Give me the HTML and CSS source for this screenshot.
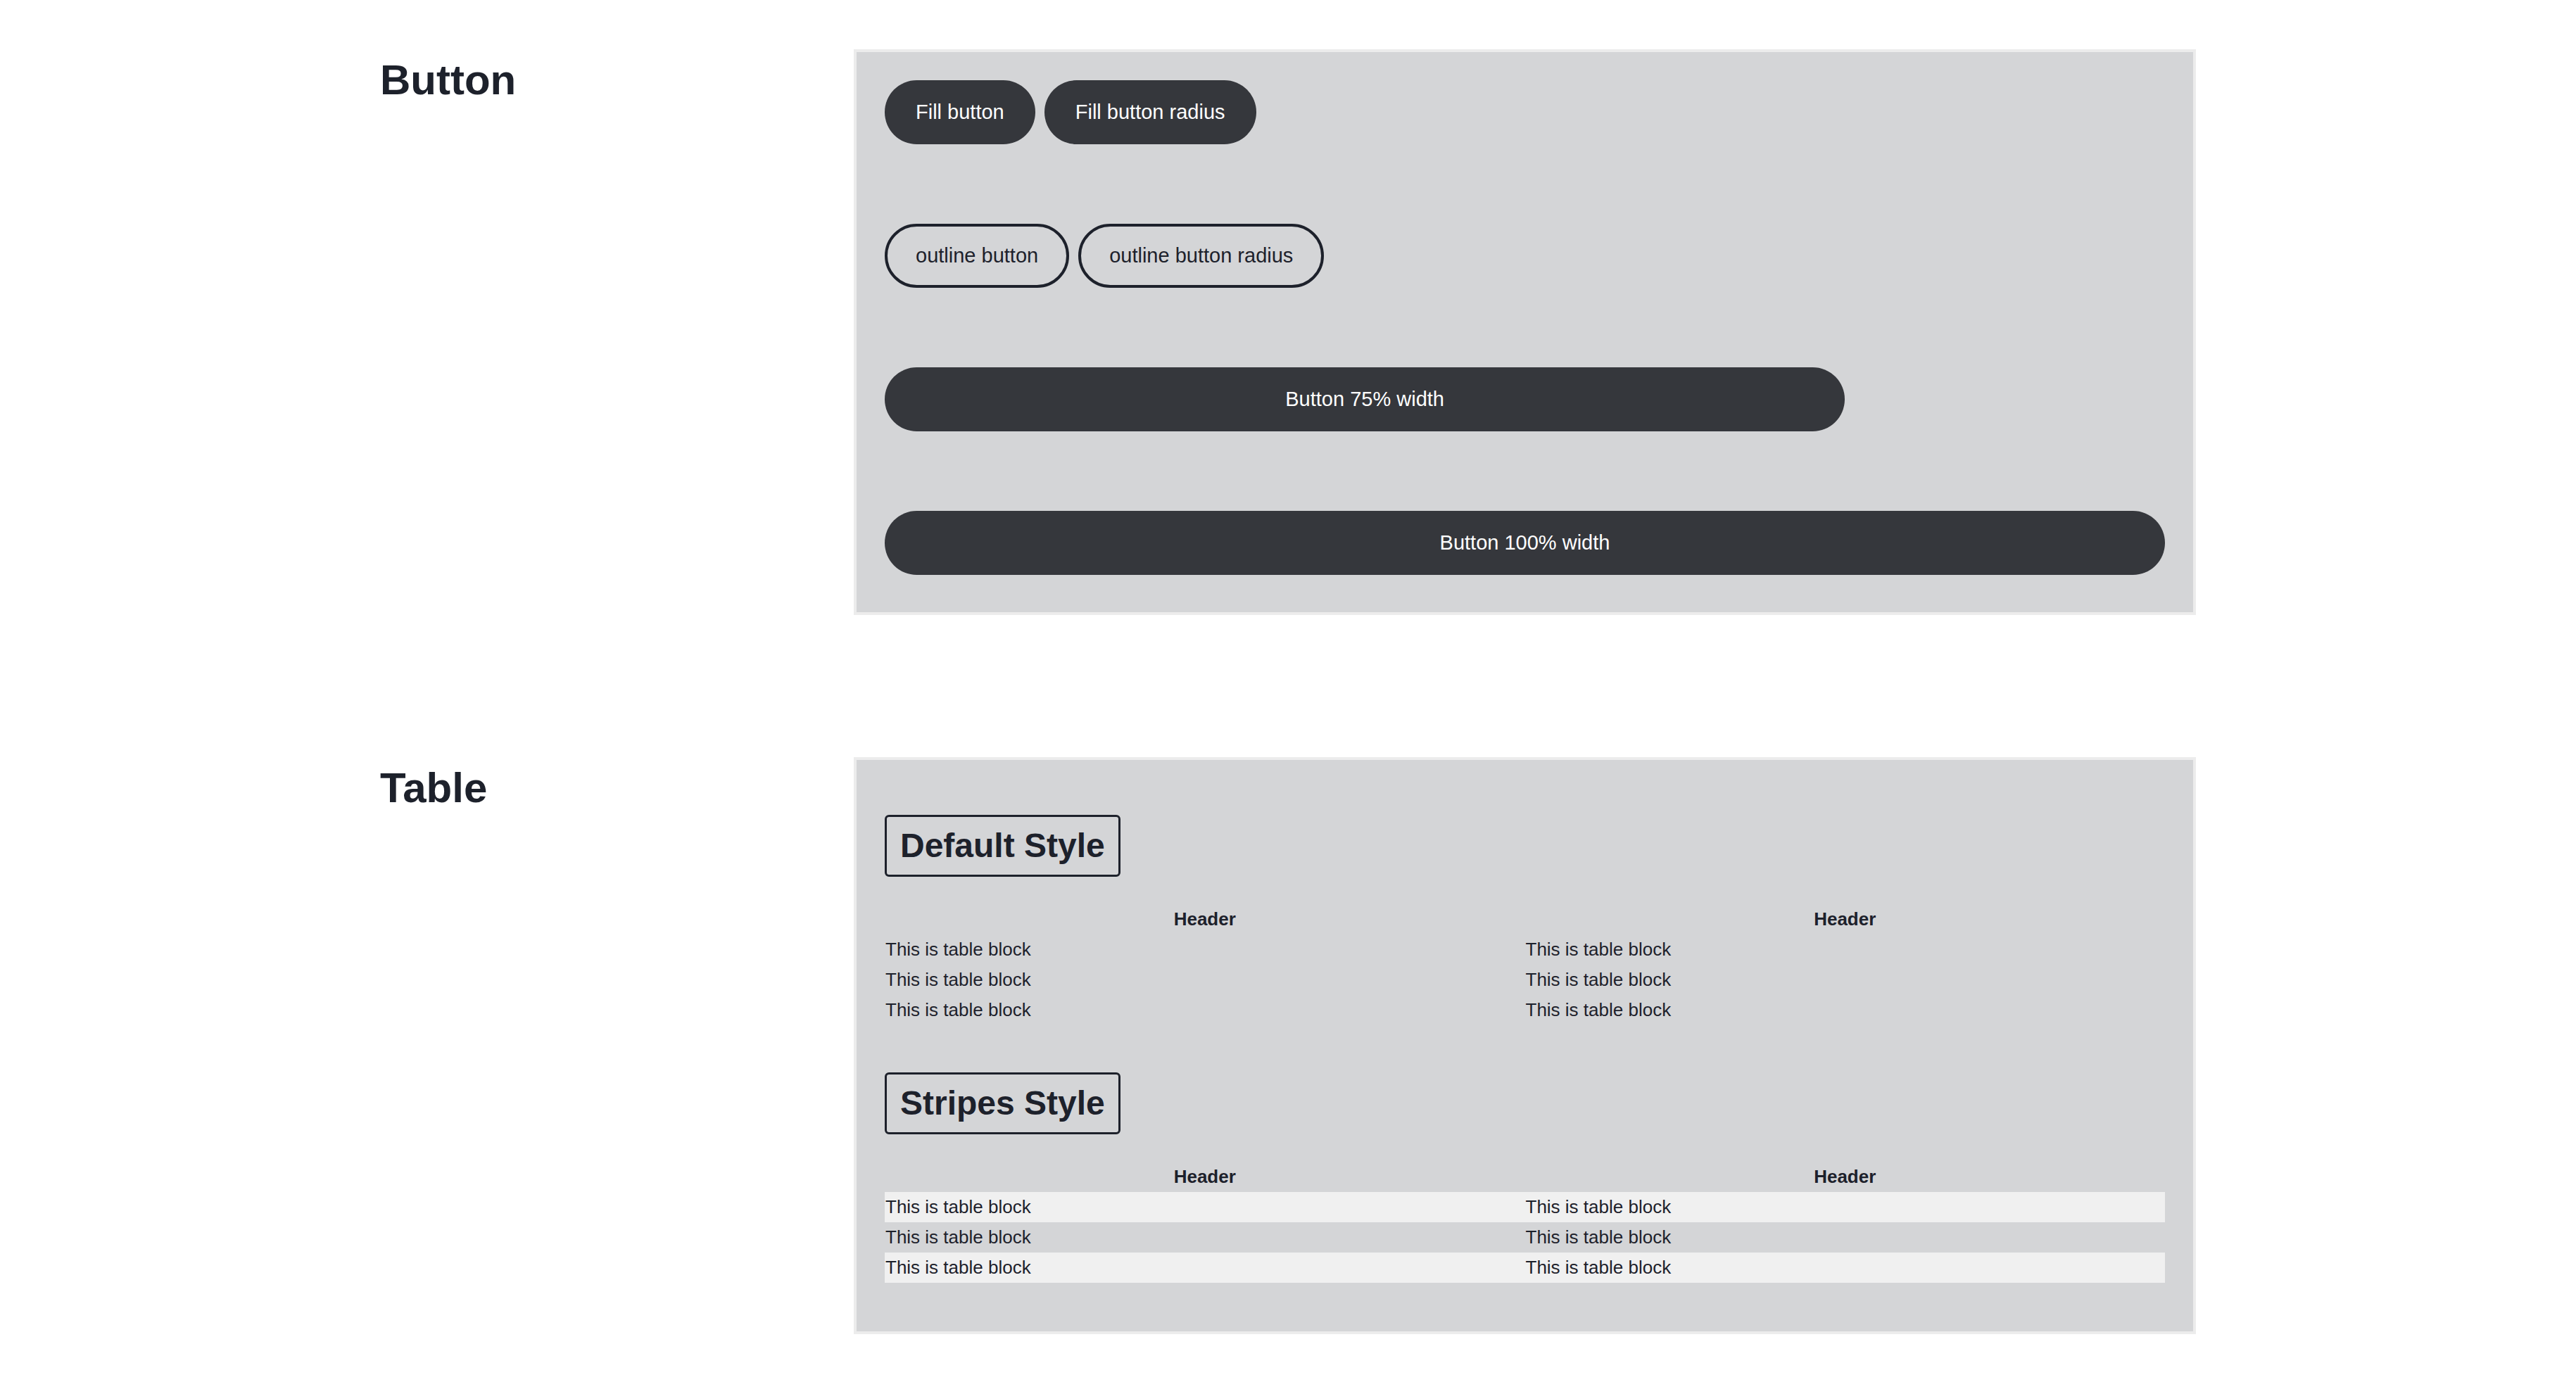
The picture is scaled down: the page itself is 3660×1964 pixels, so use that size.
FILE: index.html
```html
<!DOCTYPE html>
<html lang="en">
<head>
<meta charset="utf-8">
<title>Components</title>
<link rel="stylesheet" href="styles.css">
</head>
<body>
<div class="page">
  <section class="section">
    <h2 class="section-title">Button</h2>
    <div class="panel panel-buttons">
      <div class="btn-row">
        <button class="btn btn-fill">Fill button</button>
        <button class="btn btn-fill">Fill button radius</button>
      </div>
      <div class="btn-row">
        <button class="btn btn-outline">outline button</button>
        <button class="btn btn-outline">outline button radius</button>
      </div>
      <div class="btn-row">
        <button class="btn btn-fill btn-75">Button 75% width</button>
      </div>
      <div class="btn-row">
        <button class="btn btn-fill btn-100">Button 100% width</button>
      </div>
    </div>
  </section>
  <section class="section">
    <h2 class="section-title">Table</h2>
    <div class="panel panel-tables">
      <h3 class="table-title">Default Style</h3>
      <table class="tbl">
        <thead>
          <tr><th>Header</th><th>Header</th></tr>
        </thead>
        <tbody>
          <tr><td>This is table block</td><td>This is table block</td></tr>
          <tr><td>This is table block</td><td>This is table block</td></tr>
          <tr><td>This is table block</td><td>This is table block</td></tr>
        </tbody>
      </table>
      <h3 class="table-title">Stripes Style</h3>
      <table class="tbl tbl-stripes">
        <thead>
          <tr><th>Header</th><th>Header</th></tr>
        </thead>
        <tbody>
          <tr><td>This is table block</td><td>This is table block</td></tr>
          <tr><td>This is table block</td><td>This is table block</td></tr>
          <tr><td>This is table block</td><td>This is table block</td></tr>
        </tbody>
      </table>
    </div>
  </section>
</div>
</body>
</html>
```

FILE: styles.css
```css
* {
  box-sizing: border-box;
}

html, body {
  margin: 0;
  padding: 0;
  background: #ffffff;
}

body {
  font-family: "Liberation Sans", Arial, sans-serif;
  color: #1d212b;
  font-size: 29px;
}

.page {
  width: 2580px;
  margin: 0 auto;
  padding-top: 70px;
  padding-bottom: 20px;
  display: flex;
  flex-direction: column;
  gap: 202px;
}

.section {
  display: grid;
  grid-template-columns: 673px 1fr;
  align-items: start;
}

.section-title {
  margin: 14px 0 0;
  font-size: 60px;
  line-height: 60px;
  font-weight: bold;
  color: #1d212b;
}

.panel {
  background: #d4d5d7;
  border: 4px solid #ececec;
  padding: 40px;
}

.panel-buttons {
  display: flex;
  flex-direction: column;
  gap: 113px;
  padding-bottom: 53px;
}

.btn-row {
  display: flex;
  gap: 13px;
}

.btn {
  font-family: "Liberation Sans", Arial, sans-serif;
  font-size: 29px;
  height: 91px;
  padding: 0 40px;
  border: 4px solid transparent;
  border-radius: 46px;
  display: flex;
  align-items: center;
  justify-content: center;
  cursor: pointer;
  margin: 0;
  white-space: nowrap;
}

.btn-fill {
  background: #35373c;
  color: #ffffff;
}

.btn-outline {
  background: transparent;
  border-color: #1d212b;
  color: #1d212b;
}

.btn-75 {
  width: 75%;
}

.btn-100 {
  width: 100%;
}

.panel-tables {
  display: flex;
  flex-direction: column;
  align-items: flex-start;
}

.table-title {
  margin: 38px 0 39px;
  font-size: 48px;
  line-height: 58px;
  font-weight: bold;
  padding: 12px 19px;
  border: 3px solid #1d212b;
  border-radius: 6px;
  color: #1d212b;
}

.tbl {
  width: 100%;
  border-collapse: collapse;
  table-layout: fixed;
  margin-bottom: 29px;
  font-size: 26px;
  color: #1d212b;
}

.tbl th,
.tbl td {
  height: 43px;
  line-height: 41px;
  padding: 1px 1px;
  width: 50%;
}

.tbl th {
  text-align: center;
  font-weight: bold;
}

.tbl td {
  text-align: left;
}

.tbl-stripes tbody tr:nth-child(odd) {
  background: #f0f0f0;
}
```
